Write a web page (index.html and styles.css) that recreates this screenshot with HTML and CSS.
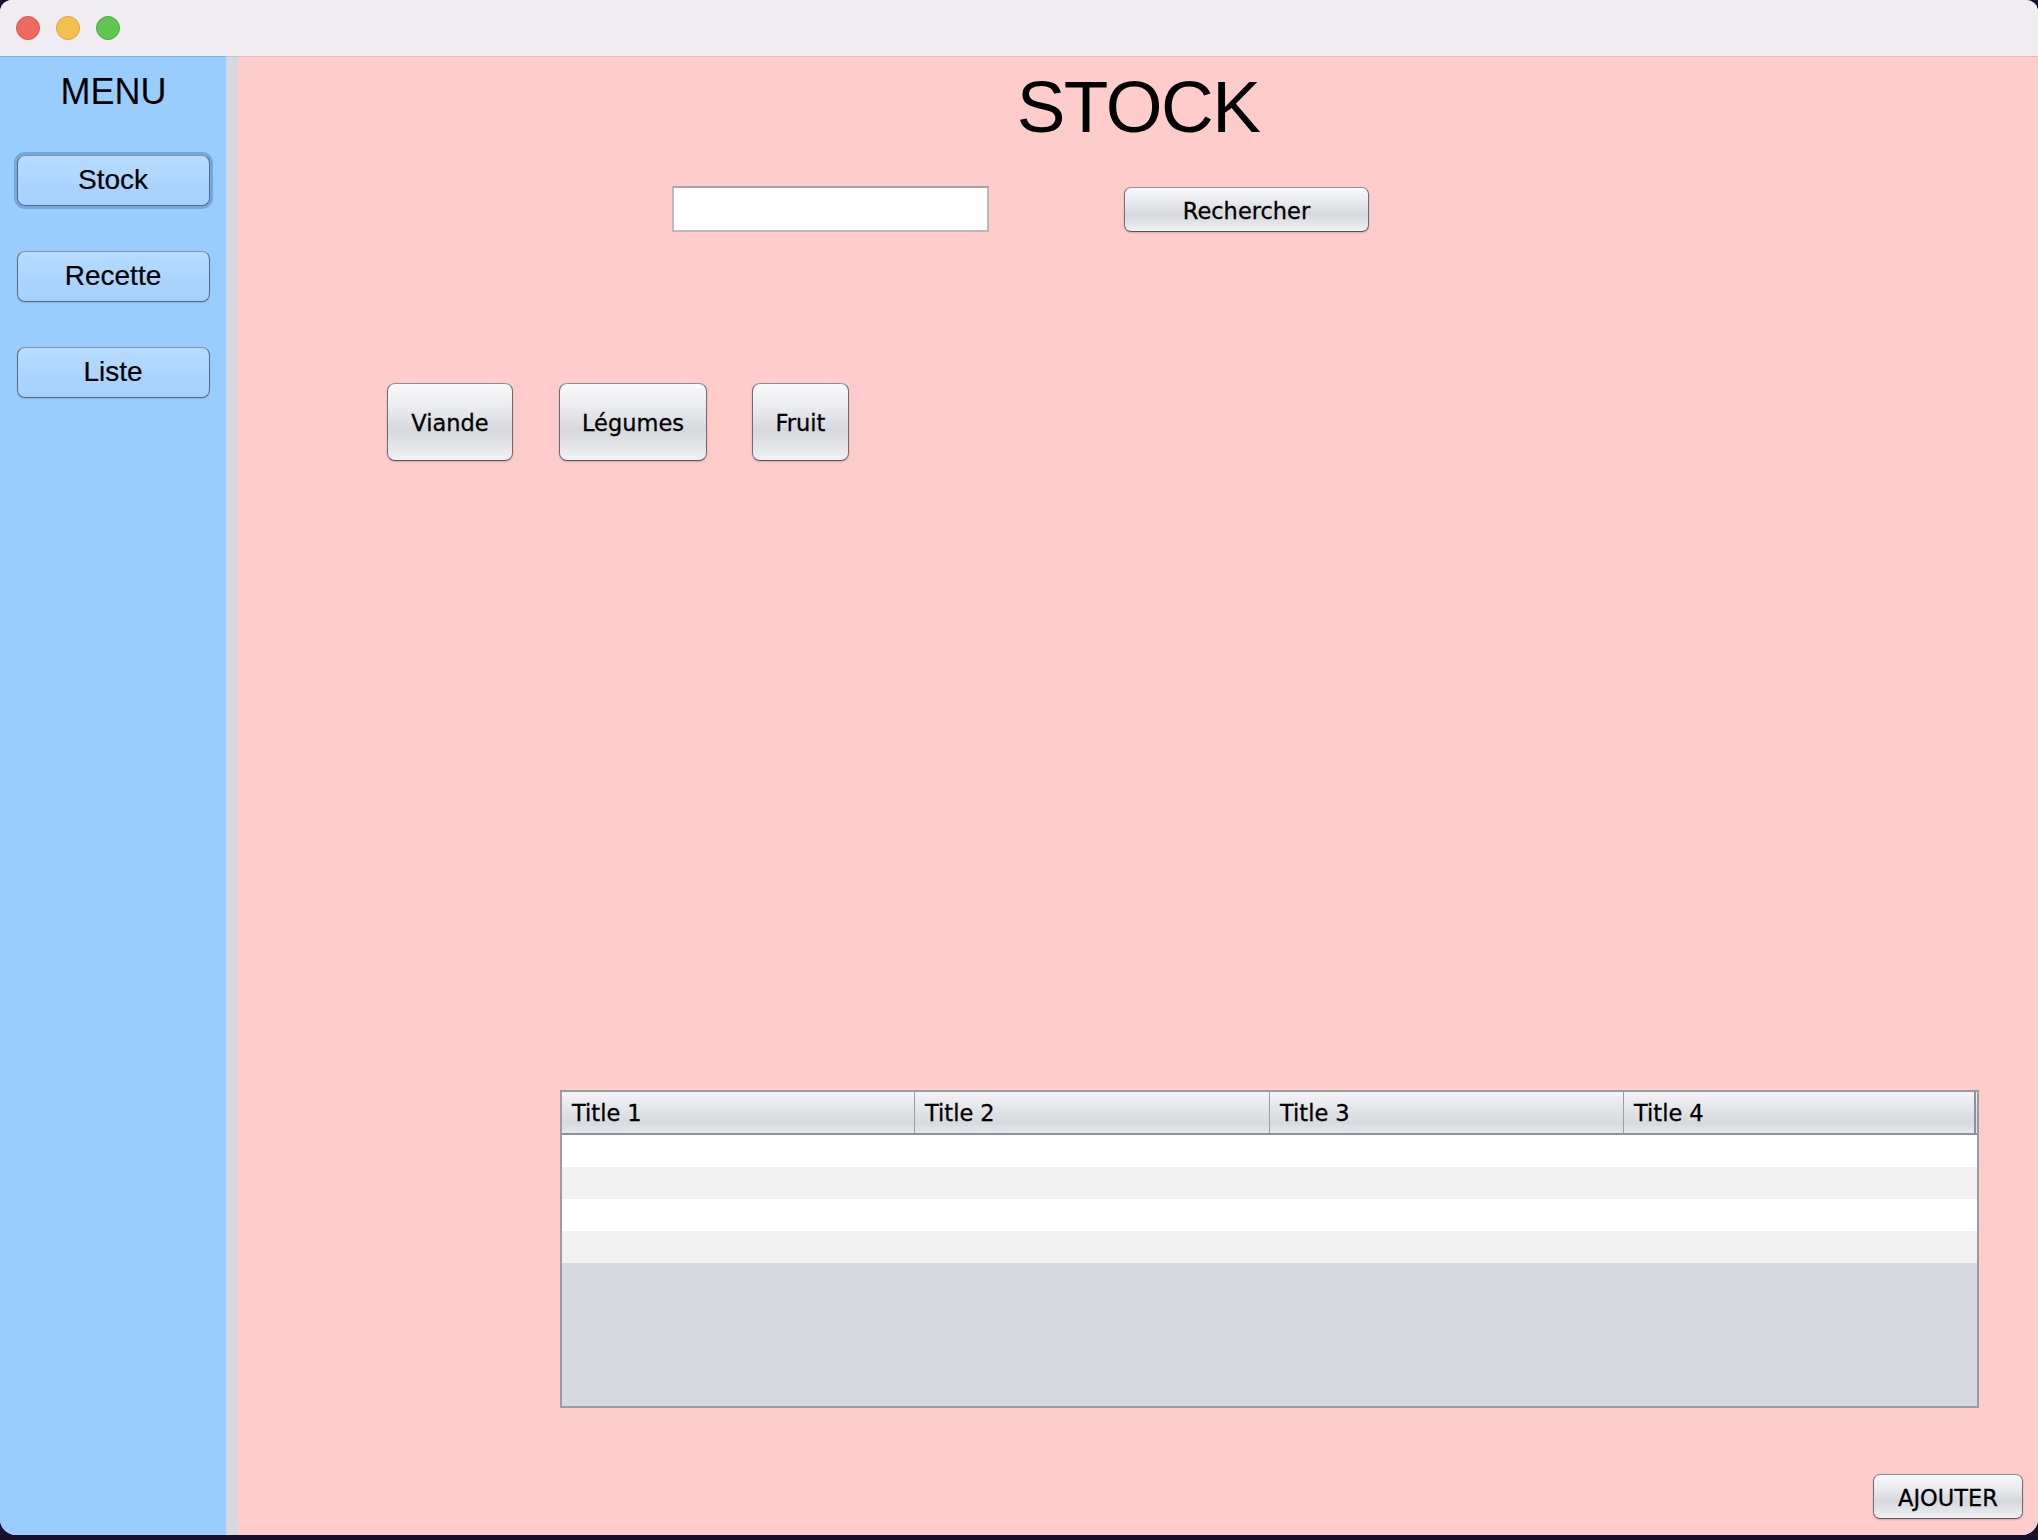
FILE: index.html
```html
<!DOCTYPE html>
<html lang="fr">
<head>
<meta charset="utf-8">
<title>Stock</title>
<link rel="stylesheet" href="styles.css">
</head>
<body>
<div class="window">
  <div class="titlebar">
    <span class="light red"></span>
    <span class="light yellow"></span>
    <span class="light green"></span>
  </div>
  <div class="content">
    <aside class="sidebar">
      <div class="menu-title">MENU</div>
      <button class="side-btn focused">Stock</button>
      <button class="side-btn">Recette</button>
      <button class="side-btn">Liste</button>
    </aside>
    <div class="gutter"></div>
    <main class="main">
      <h1 class="page-title">STOCK</h1>
      <div class="search-row">
        <input class="search-input" type="text">
        <button class="aqua-btn search-btn">Rechercher</button>
      </div>
      <div class="cat-row">
        <button class="aqua-btn cat-btn cat-viande">Viande</button>
        <button class="aqua-btn cat-btn cat-legumes">Légumes</button>
        <button class="aqua-btn cat-btn cat-fruit">Fruit</button>
      </div>
      <div class="table">
        <div class="thead">
          <div class="th">Title 1</div>
          <div class="th">Title 2</div>
          <div class="th">Title 3</div>
          <div class="th last">Title 4</div>
        </div>
        <div class="row"></div>
        <div class="row alt"></div>
        <div class="row"></div>
        <div class="row alt"></div>
        <div class="empty"></div>
      </div>
      <button class="aqua-btn add-btn">AJOUTER</button>
    </main>
  </div>
</div>
</body>
</html>
```

FILE: styles.css
```css
html, body {
  margin: 0;
  padding: 0;
}
body {
  width: 2038px;
  height: 1540px;
  background: #17102e;
  overflow: hidden;
}
.window {
  width: 2038px;
  height: 1535px;
  border-radius: 12px 12px 16px 16px;
  overflow: hidden;
  display: flex;
  flex-direction: column;
  background: #efedf2;
}
.titlebar {
  height: 56px;
  flex: none;
  display: flex;
  align-items: center;
  gap: 16px;
  padding-left: 16px;
  background: #efedf2;
}
.light {
  width: 22px;
  height: 22px;
  border-radius: 50%;
  border: 1px solid transparent;
}
.red { background: #ee6a5f; border-color: #d8554b; }
.yellow { background: #f5bf4f; border-color: #d9a33f; }
.green { background: #61c554; border-color: #4daa41; }

.content {
  flex: 1;
  display: flex;
  min-height: 0;
}
.sidebar {
  width: 226px;
  flex: none;
  background: #99ccff;
  border-top: 1px solid rgba(0, 40, 120, 0.18);
  display: flex;
  flex-direction: column;
  align-items: center;
}
.menu-title {
  font-family: "Liberation Sans", Arial, sans-serif;
  font-size: 36px;
  line-height: 36px;
  color: #000;
  margin-top: 17px;
  margin-left: 1px;
}
.side-btn {
  font-family: "Liberation Sans", Arial, sans-serif;
  font-size: 28px;
  color: #000;
  width: 193px;
  height: 51px;
  padding: 0 0 1px;
  border: 1.5px solid #5f6670;
  border-top-color: #8a9098;
  border-radius: 8px;
  background: linear-gradient(#b8dcff, #aad4ff 60%, #a6d1fd);
  box-shadow: 0 1px 1px rgba(0, 0, 0, 0.12);
  margin-top: 45px;
  -webkit-text-stroke: 0.2px #000;
}
.side-btn.focused {
  box-shadow: 0 0 0 3px rgba(78, 138, 204, 0.55);
}
.gutter {
  width: 12px;
  flex: none;
  background: #d5d8dd;
  border-top: 1px solid rgba(0, 0, 0, 0.1);
}
.main {
  flex: 1;
  background: #ffcccc;
  border-top: 1px solid rgba(120, 0, 0, 0.1);
  display: flex;
  flex-direction: column;
  align-items: flex-start;
}
.page-title {
  align-self: stretch;
  margin: 10px 0 0;
  height: 80px;
  font-family: "Liberation Sans", Arial, sans-serif;
  font-weight: normal;
  font-size: 73px;
  line-height: 80px;
  letter-spacing: -1.5px;
  text-align: center;
  color: #000;
}
.aqua-btn {
  font-family: "DejaVu Sans", Verdana, sans-serif;
  font-size: 22.5px;
  color: #000;
  -webkit-text-stroke: 0.3px #000;
  border: 1px solid #6c6d72;
  border-top-color: #8e9095;
  border-bottom-color: #55565a;
  border-radius: 7px;
  background: linear-gradient(#f8f9fa 0%, #e8e9ed 35%, #d6d8dd 60%, #e4e6ea 85%, #f1f2f5 100%);
  box-shadow: 0 1px 2px rgba(0, 0, 0, 0.18);
  padding: 2px 0 0;
}
.search-row {
  display: flex;
  align-items: flex-start;
  margin-top: 39px;
  margin-left: 434px;
}
.search-input {
  box-sizing: border-box;
  width: 317px;
  height: 46px;
  border: 2px solid #b9b9b9;
  border-top-color: #a5a5a5;
  background: #fff;
  margin: 0;
  padding: 0 6px;
  outline: none;
}
.search-btn {
  width: 245px;
  height: 45px;
  margin-left: 135px;
  margin-top: 1px;
}
.cat-row {
  display: flex;
  gap: 46px;
  margin-top: 151px;
  margin-left: 149px;
}
.cat-btn {
  height: 78px;
  border-radius: 8px;
}
.cat-viande { width: 126px; }
.cat-legumes { width: 148px; }
.cat-fruit { width: 97px; margin-left: -1px; }
.table {
  margin-top: 629px;
  margin-left: 322px;
  width: 1419px;
  height: 318px;
  box-sizing: border-box;
  border: 2px solid #9a9ca4;
  display: flex;
  flex-direction: column;
  background: #d6d9de;
}
.thead {
  height: 41px;
  flex: none;
  display: grid;
  grid-template-columns: 353px 355px 354px 1fr;
  border-bottom: 2px solid #8e9097;
  background: linear-gradient(#f3f4f6 0%, #e3e5e9 40%, #d6d9de 75%, #e6e8ec 100%);
}
.th {
  font-family: "DejaVu Sans", Verdana, sans-serif;
  font-size: 22.5px;
  line-height: 43px;
  color: #000;
  -webkit-text-stroke: 0.3px #000;
  padding-left: 10px;
  border-right: 1px solid #9b9ea5;
}
.th.last {
  border-right: 2px solid #8e9097;
  margin-right: 1px;
}
.row {
  height: 32px;
  flex: none;
  background: #ffffff;
}
.row.alt {
  background: #f1f1f1;
}
.empty {
  flex: 1;
  background: #d6d9de;
}
.add-btn {
  align-self: flex-end;
  margin-top: 66px;
  margin-right: 15px;
  width: 150px;
  height: 45px;
}
```
